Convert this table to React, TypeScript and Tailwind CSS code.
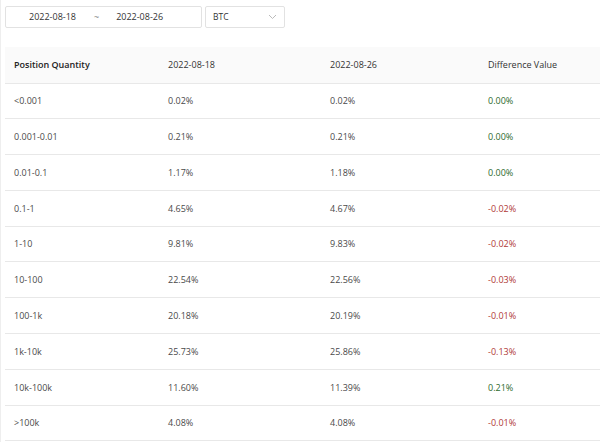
const rows = [
  { range: '<0.001', a: '0.02%', b: '0.02%', diff: '0.00%' },
  { range: '0.001-0.01', a: '0.21%', b: '0.21%', diff: '0.00%' },
  { range: '0.01-0.1', a: '1.17%', b: '1.18%', diff: '0.00%' },
  { range: '0.1-1', a: '4.65%', b: '4.67%', diff: '-0.02%' },
  { range: '1-10', a: '9.81%', b: '9.83%', diff: '-0.02%' },
  { range: '10-100', a: '22.54%', b: '22.56%', diff: '-0.03%' },
  { range: '100-1k', a: '20.18%', b: '20.19%', diff: '-0.01%' },
  { range: '1k-10k', a: '25.73%', b: '25.86%', diff: '-0.13%' },
  { range: '10k-100k', a: '11.60%', b: '11.39%', diff: '0.21%' },
  { range: '>100k', a: '4.08%', b: '4.08%', diff: '-0.01%' },
];

// negative values red, the rest green
const diffColor = (v: string) => (v.startsWith('-') ? 'text-[#b03a36]' : 'text-[#2d6a2d]');

export default function App() {
  return (
    <div className="w-[600px] h-[442px] bg-white overflow-hidden text-[9px] text-[#4a4a4a] font-['Open_Sans',sans-serif] border-l border-[#eee]">
      <div className="flex items-start gap-[3px] pl-[4px] pt-[6px] h-[47px]">
        <div className="w-[197px] h-[22px] border border-[#e2e2e2] rounded-[2px] flex items-center text-[#333]">
          <span className="ml-[23px]">2022-08-18</span>
          <span className="ml-[18px] text-[#888]">~</span>
          <span className="ml-[17px]">2022-08-26</span>
        </div>
        <div className="w-[80px] h-[22px] border border-[#e2e2e2] rounded-[2px] flex items-center justify-between px-[7px] text-[#333]">
          <span className="text-[8.5px]">BTC</span>
          <svg width="9" height="6" viewBox="0 0 9 6" fill="none" stroke="#bbb" strokeWidth="1">
            <path d="M1 1l3.5 3.5L8 1" />
          </svg>
        </div>
      </div>
      <table className="ml-[4px] w-[596px] border-collapse">
        <thead>
          <tr className="bg-[#fafafa] h-[36px] border-b border-[#e8e8e8]">
            <th className="text-left font-semibold text-[#222] pl-[9px] w-[163px]">Position Quantity</th>
            <th className="text-left font-normal text-[#333] w-[162px]">2022-08-18</th>
            <th className="text-left font-normal text-[#333] w-[158px]">2022-08-26</th>
            <th className="text-left font-normal text-[#333]">Difference Value</th>
          </tr>
        </thead>
        <tbody>
          {rows.map((r, i) => (
            <tr key={i} className="h-[35.8px] border-b border-[#e8e8e8]">
              <td className="pl-[9px]">{r.range}</td>
              <td>{r.a}</td>
              <td>{r.b}</td>
              <td className={diffColor(r.diff)}>{r.diff}</td>
            </tr>
          ))}
        </tbody>
      </table>
    </div>
  );
}
